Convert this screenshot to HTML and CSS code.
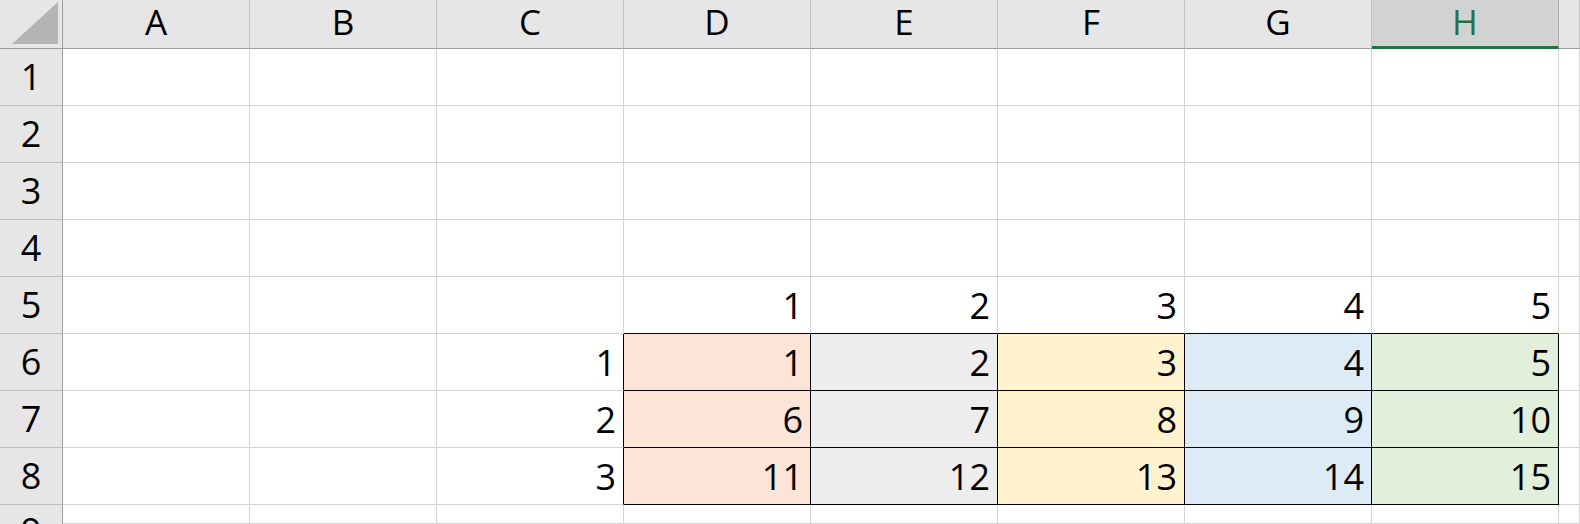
FILE: index.html
```html
<!DOCTYPE html>
<html>
<head>
<meta charset="utf-8">
<link rel="stylesheet" href="styles.css">
</head>
<body>
<div class="sheet">
  <div class="corner"><svg width="62" height="48" viewBox="0 0 62 48"><polygon points="12,44 58,44 58,2" fill="#b4b4b4"/></svg></div>
  <div class="ch">A</div><div class="ch">B</div><div class="ch">C</div><div class="ch">D</div><div class="ch">E</div><div class="ch">F</div><div class="ch">G</div><div class="ch sel">H</div><div class="ch"></div>

  <div class="rh">1</div><div class="c"></div><div class="c"></div><div class="c"></div><div class="c"></div><div class="c"></div><div class="c"></div><div class="c"></div><div class="c"></div><div class="c"></div>
  <div class="rh">2</div><div class="c"></div><div class="c"></div><div class="c"></div><div class="c"></div><div class="c"></div><div class="c"></div><div class="c"></div><div class="c"></div><div class="c"></div>
  <div class="rh">3</div><div class="c"></div><div class="c"></div><div class="c"></div><div class="c"></div><div class="c"></div><div class="c"></div><div class="c"></div><div class="c"></div><div class="c"></div>
  <div class="rh">4</div><div class="c"></div><div class="c"></div><div class="c"></div><div class="c"></div><div class="c"></div><div class="c"></div><div class="c"></div><div class="c"></div><div class="c"></div>

  <div class="rh">5</div><div class="c"></div><div class="c"></div><div class="c"></div><div class="c top">1</div><div class="c top">2</div><div class="c top">3</div><div class="c top">4</div><div class="c top">5</div><div class="c"></div>
  <div class="rh">6</div><div class="c"></div><div class="c"></div><div class="c left">1</div><div class="c t p1">1</div><div class="c t p2">2</div><div class="c t p3">3</div><div class="c t p4">4</div><div class="c t p5">5</div><div class="c"></div>
  <div class="rh">7</div><div class="c"></div><div class="c"></div><div class="c left">2</div><div class="c t p1">6</div><div class="c t p2">7</div><div class="c t p3">8</div><div class="c t p4">9</div><div class="c t p5">10</div><div class="c"></div>
  <div class="rh">8</div><div class="c"></div><div class="c"></div><div class="c left">3</div><div class="c t p1">11</div><div class="c t p2">12</div><div class="c t p3">13</div><div class="c t p4">14</div><div class="c t p5">15</div><div class="c"></div>
  <div class="rh last">9</div><div class="c"></div><div class="c"></div><div class="c"></div><div class="c"></div><div class="c"></div><div class="c"></div><div class="c"></div><div class="c"></div><div class="c"></div>
</div>
</body>
</html>
```
FILE: styles.css
```css
html, body {
  margin: 0;
  padding: 0;
  background: #ffffff;
  overflow: hidden;
}
body {
  width: 1580px;
  height: 524px;
  font-family: "Open Sans", "Noto Sans", "Liberation Sans", sans-serif;
  color: #000;
}
.sheet {
  display: grid;
  grid-template-columns: 63px repeat(8, 187px) 21px;
  grid-template-rows: 49px repeat(8, 57px) 19px;
}
.corner {
  background: #e6e6e6;
  border-right: 1px solid #9e9e9e;
  border-bottom: 1px solid #9e9e9e;
  display: flex;
}
.corner svg { display: block; }
.ch {
  background: #e6e6e6;
  border-right: 1px solid #c0c0c0;
  border-bottom: 1px solid #9e9e9e;
  display: flex;
  align-items: center;
  justify-content: center;
  font-size: 35px;
  line-height: 35px;
  padding-bottom: 6px;
  box-sizing: border-box;
}
.ch.sel {
  background: #d2d2d2;
  color: #217346;
  border-bottom: 3px solid #217346;
  padding-bottom: 4px;
  border-right-color: #ababab;
}
.rh {
  background: #e6e6e6;
  border-right: 1px solid #9e9e9e;
  border-bottom: 1px solid #bdbdbd;
  display: flex;
  align-items: center;
  justify-content: center;
  font-size: 36px;
  line-height: 36px;
}
.rh.last {
  align-items: flex-start;
  padding-top: 8px;
  overflow: hidden;
  border-bottom: none;
  box-sizing: border-box;
}
.c {
  border-right: 1px solid #d4d4d4;
  border-bottom: 1px solid #d4d4d4;
  display: flex;
  align-items: flex-end;
  justify-content: flex-end;
  font-size: 36px;
  line-height: 36px;
  padding: 0 7px 9px 0;
  box-sizing: border-box;
}
.c.top { border-bottom-color: #000; }
.c.left { border-right-color: #000; }
.c.t {
  border-right-color: #000;
  border-bottom-color: #000;
}
.p1 { background: #fce4d6; }
.p2 { background: #ededed; }
.p3 { background: #fff2cc; }
.p4 { background: #ddebf7; }
.p5 { background: #e2efda; }
```
